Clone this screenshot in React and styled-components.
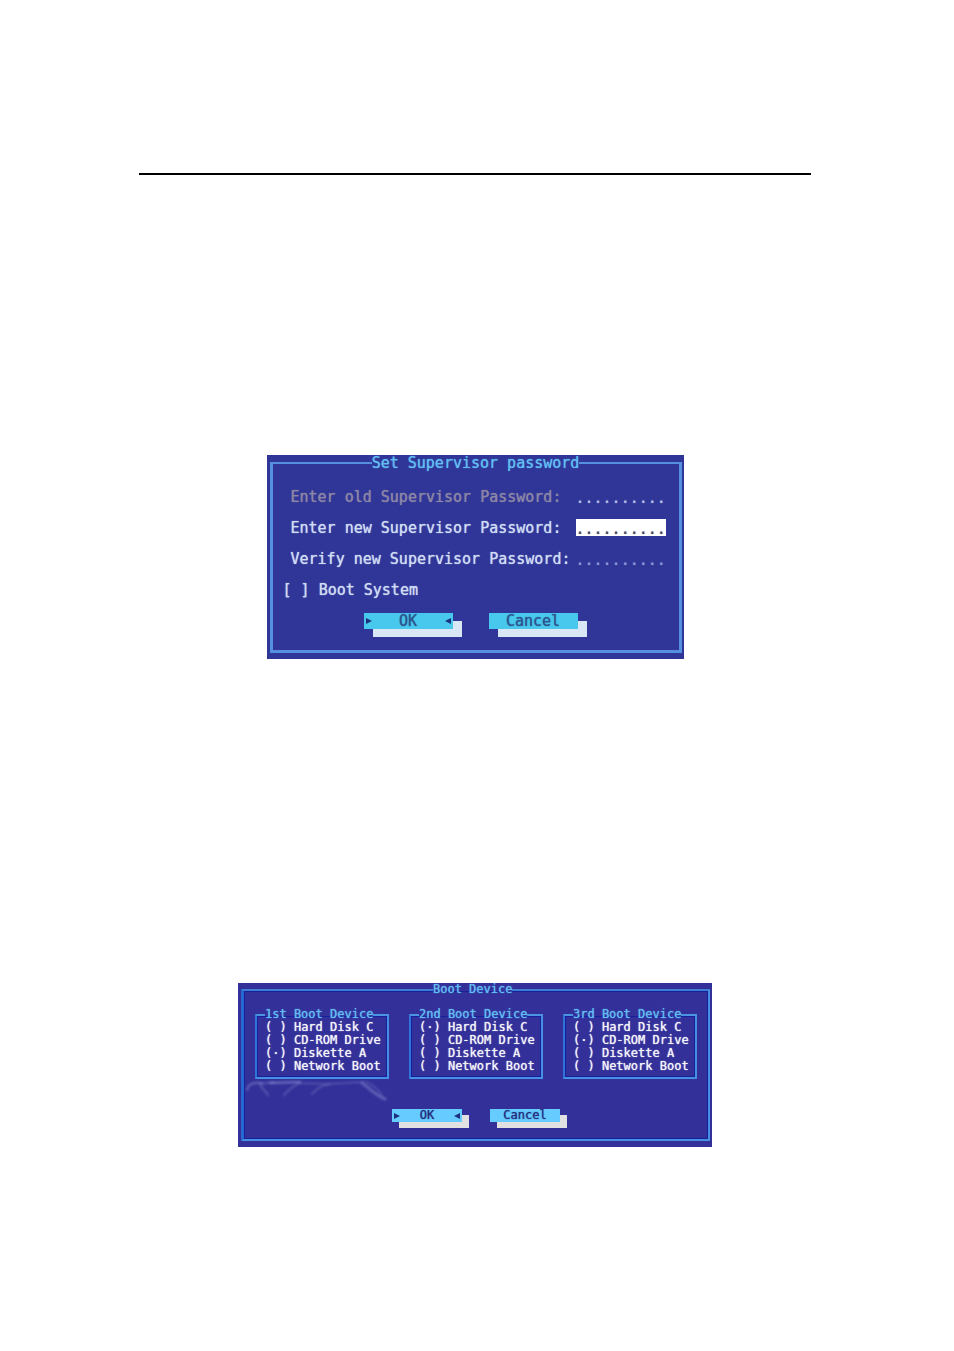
import React, { useState } from "react";
import styled, { createGlobalStyle, css } from "styled-components";

const GlobalStyle = createGlobalStyle`
  * { box-sizing: border-box; }
  body {
    margin: 0;
    background: #ffffff;
  }
`;

const mono = css`
  font-family: "DejaVu Sans Mono", "Liberation Mono", monospace;
  text-shadow: 0 0 1px currentColor;
`;

const Page = styled.main`
  display: flex;
  flex-direction: column;
  align-items: center;
  padding: 173px 143px 204px 139px;
`;

const Rule = styled.hr`
  width: 100%;
  height: 2px;
  margin: 0;
  border: 0;
  background: #000000;
`;

const Dialog = styled.form`
  ${mono}
  position: relative;
  width: 100%;
  max-width: ${(p) => (p.$small ? 474 : 417)}px;
  margin-top: ${(p) => (p.$small ? 324 : 280)}px;
  padding: 0 2px 6px 3px;
  background: ${(p) => (p.$small ? "#333199" : "#2f3697")};
  font-size: ${(p) => (p.$small ? 12 : 15)}px;
  line-height: ${(p) => (p.$small ? 13 : 16)}px;
  color: ${(p) => (p.$small ? "#f4f4fa" : "#cfdcf4")};
`;

const Frame = styled.fieldset`
  min-width: 0;
  margin: 0;
  padding: ${(p) => p.$padding};
  border: 3px solid #5590de;
  border-top-width: 2px;
  ${(p) =>
    p.$etched &&
    css`
      border-width: 2px 2px 2px 3px;
      border-color: #3f7cd2 #4690e2 #4690e2 #2668cf;
      box-shadow: inset 0 0 0 1px #17209c;
    `}
`;

const Title = styled.legend`
  padding: 0;
  margin: ${(p) => p.$margin || "0"};
  color: #62bdf2;
`;

const Group = styled.fieldset`
  flex: 1;
  min-width: 0;
  margin: 0;
  padding: 0 1px 4px 8px;
  border: 2px solid #4690e2;
  border-color: #4a94e0 #4690e2 #4690e2 #2f74d6;
  box-shadow: inset 0 0 0 1px #17209c;
`;

const Groups = styled.div`
  display: flex;
  gap: 20px;
`;

const Field = styled.div`
  display: flex;
  align-items: center;
  justify-content: space-between;
  height: 31px;
  padding: 0 13px 0 18px;
  color: ${(p) => (p.$dim ? "#8c86a6" : "inherit")};
`;

const PasswordBox = styled.input`
  ${mono}
  width: 90px;
  height: 17px;
  padding: 3px 0 0 0;
  border: 0;
  border-radius: 0;
  outline: 0;
  font-size: 15px;
  line-height: 14px;
  background: ${(p) => (p.$active ? "#ffffff" : "transparent")};
  color: ${(p) => p.$ink};
`;

const Choice = styled.label`
  display: flex;
  position: relative;
  align-items: center;
  white-space: pre;
  height: ${(p) => p.$height}px;
  padding-left: ${(p) => p.$indent || 0}px;
`;

const HiddenInput = styled.input`
  position: absolute;
  width: 1px;
  height: 1px;
  margin: 0;
  opacity: 0;
`;

const Actions = styled.div`
  display: flex;
  justify-content: center;
  gap: ${(p) => (p.$small ? 28 : 36)}px;
  margin: ${(p) => (p.$small ? "30px 0 0" : "8px 10px 0 0")};
`;

const Button = styled.button`
  ${mono}
  display: flex;
  align-items: center;
  justify-content: ${(p) => (p.$marked ? "space-between" : "center")};
  width: ${(p) => (p.$small ? 70 : 89)}px;
  height: ${(p) => (p.$small ? 13 : 16)}px;
  padding: 0 2px;
  border: 0;
  border-radius: 0;
  font-size: ${(p) => (p.$small ? 12 : 15)}px;
  line-height: ${(p) => (p.$small ? 13 : 16)}px;
  background: ${(p) => (p.$small ? "#66ccff" : "#48c8ec")};
  color: ${(p) => (p.$small ? "#26307f" : "#2d5590")};
  box-shadow: ${(p) => (p.$small ? "7px 6px 0 #e1e1e1" : "9px 8px 0 #d8e6f6")};
`;

const Smudge = styled.svg`
  position: absolute;
  left: 2px;
  top: 92px;
  pointer-events: none;
`;

function Marker({ left }) {
  return (
    <svg width="6" height="6" viewBox="0 0 6 6" aria-hidden="true">
      <path d={left ? "M6 0 L0 3 L6 6 Z" : "M0 0 L6 3 L0 6 Z"} fill="#1d3080" />
    </svg>
  );
}

function DialogActions({ small }) {
  return (
    <Actions $small={small}>
      <Button type="button" $small={small} $marked>
        <Marker />
        OK
        <Marker left />
      </Button>
      <Button type="button" $small={small}>Cancel</Button>
    </Actions>
  );
}

const FIELDS = [
  { id: "old", label: "Enter old Supervisor Password:", ink: "#b3bbe4", dim: true },
  { id: "new", label: "Enter new Supervisor Password:", ink: "#4a4a66", active: true },
  { id: "verify", label: "Verify new Supervisor Password:", ink: "#8c97d8" },
];

function PasswordDialog() {
  const [boot, setBoot] = useState(false);
  return (
    <Dialog>
      <Frame $padding="10px 0 21px">
        <Title $margin="0 auto">Set Supervisor password</Title>
        {FIELDS.map((f) => (
          <Field key={f.id} $dim={f.dim}>
            <label htmlFor={f.id}>{f.label}</label>
            <PasswordBox id={f.id} defaultValue=".........." $active={f.active} $ink={f.ink} />
          </Field>
        ))}
        <Choice $height={31} $indent={10}>
          <HiddenInput type="checkbox" checked={boot} onChange={() => setBoot(!boot)} />
          {boot ? "[x] " : "[ ] "}Boot System
        </Choice>
        <DialogActions />
      </Frame>
    </Dialog>
  );
}

const DEVICES = ["Hard Disk C", "CD-ROM Drive", "Diskette A", "Network Boot"];

function DeviceGroup({ title, initial }) {
  const [selected, setSelected] = useState(initial);
  return (
    <Group>
      <Title>{title}</Title>
      {DEVICES.map((device, i) => (
        <Choice key={device} $height={13}>
          <HiddenInput
            type="radio"
            name={title}
            checked={selected === i}
            onChange={() => setSelected(i)}
          />
          {selected === i ? "(·) " : "( ) "}
          {device}
        </Choice>
      ))}
    </Group>
  );
}

function BootDialog() {
  return (
    <Dialog $small>
      <Frame $etched $padding="12px 11px 17px">
        <Title $margin="0 0 0 178px">Boot Device</Title>
        <Groups>
          <DeviceGroup title="1st Boot Device" initial={2} />
          <DeviceGroup title="2nd Boot Device" initial={0} />
          <DeviceGroup title="3rd Boot Device" initial={1} />
        </Groups>
        <DialogActions small />
      </Frame>
      <Smudge width="150" height="34" viewBox="0 0 150 34" fill="none" aria-hidden="true">
        <defs>
          <filter id="soft" x="-10%" y="-30%" width="120%" height="160%">
            <feGaussianBlur stdDeviation="1" />
          </filter>
        </defs>
        <g filter="url(#soft)" stroke="#8f8bd2" strokeLinecap="round">
          <path d="M7 15 C8 9 14 7 22 8" strokeWidth="2" opacity="0.55" />
          <path d="M28 20 C25 15 20 12 20 9 L34 7" strokeWidth="2" opacity="0.4" />
          <path d="M30 8 L60 7" strokeWidth="2" opacity="0.7" />
          <path d="M60 8 L86 9 L124 7" strokeWidth="1" opacity="0.6" />
          <path d="M44 20 C50 13 54 10 60 8" strokeWidth="2" opacity="0.35" />
          <path d="M72 19 C77 13 82 10 90 9" strokeWidth="2" opacity="0.35" />
          <path d="M122 8 C128 12 135 20 145 24" strokeWidth="3" opacity="0.5" />
          <path d="M126 7 C134 10 138 14 142 20" strokeWidth="2" opacity="0.3" />
        </g>
      </Smudge>
    </Dialog>
  );
}

export default function App() {
  return (
    <>
      <GlobalStyle />
      <Page>
        <Rule />
        <PasswordDialog />
        <BootDialog />
      </Page>
    </>
  );
}
